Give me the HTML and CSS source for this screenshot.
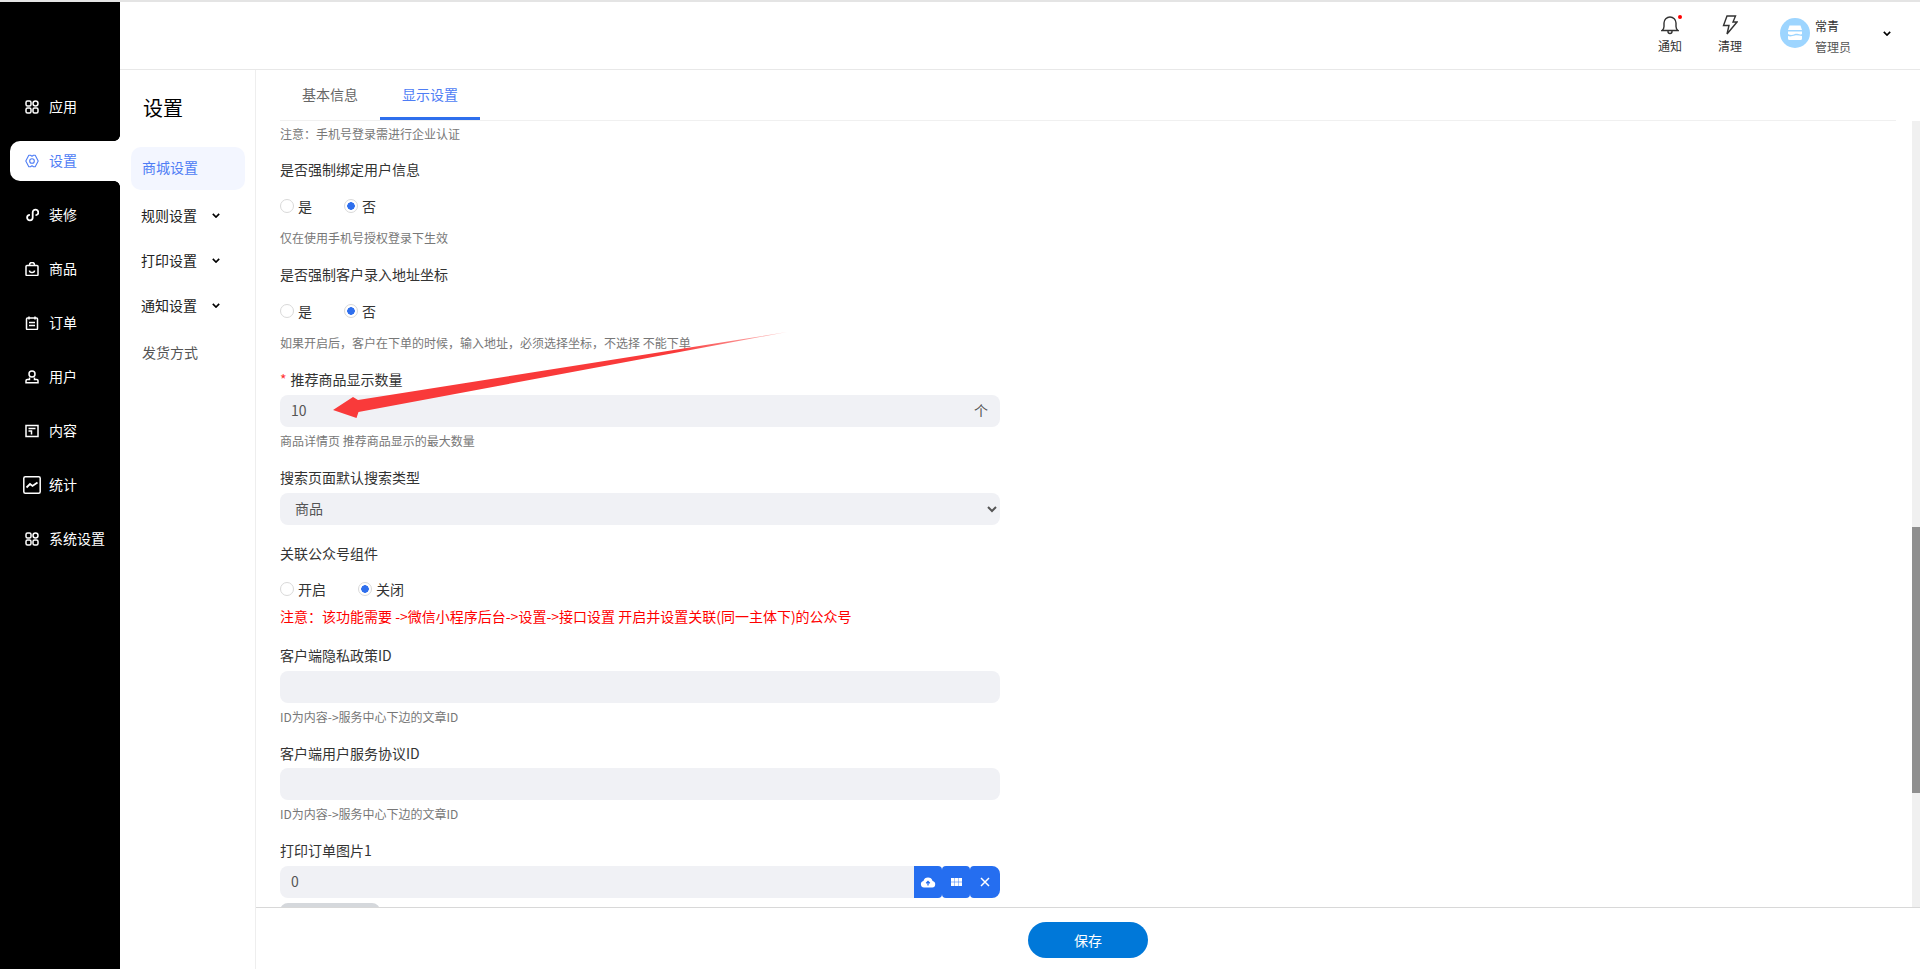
FILE: index.html
```html
<!DOCTYPE html>
<html lang="zh-CN">
<head>
    <meta charset="UTF-8">
    <meta name="viewport" content="width=device-width, initial-scale=1.0">
    <title>显示设置</title>
    <link rel="stylesheet" href="styles.css">
</head>
<body>
<div class="app">

    <!-- Main sidebar -->
    <nav class="sidebar">
        <a class="side-item"><svg class="side-icon" viewBox="0 0 14 14"><rect x="1" y="1" width="5" height="5" rx="1.5"/><rect x="8" y="1" width="5" height="5" rx="2.5"/><rect x="1" y="8" width="5" height="5" rx="1.5"/><rect x="8" y="8" width="5" height="5" rx="1.5"/></svg>应用</a>
        <a class="side-item active"><svg class="side-icon" viewBox="0 0 14 14"><path d="M.8 7L3.800 1.300H5.500L7 2.300 8.500 1.300H10.200L13.200 7 10.200 12.700H8.500L7 11.700 5.500 12.700H3.800z"/><circle cx="7" cy="7" r="2.300"/></svg>设置</a>
        <a class="side-item"><svg class="side-icon" viewBox="0 0 14 14"><path d="M10.500 7.200A2.800 2.800 0 1 0 7.700 4.400V9.600A2.800 2.800 0 1 1 4.900 6.800" stroke-width="1.8"/></svg>装修</a>
        <a class="side-item"><svg class="side-icon" viewBox="0 0 14 14"><rect x="1" y="3.500" width="12" height="10" rx="1"/><path d="M4.500 3.500V3a2.500 2.500 0 0 1 5 0v.5M4.500 8.500a2.500 2 0 0 0 5 0"/></svg>商品</a>
        <a class="side-item"><svg class="side-icon" viewBox="0 0 14 14"><rect x="1.500" y="2" width="11" height="11.500" rx="1"/><path d="M4 .5v3M10 .5v3M4 6.500h6M4 9.500h6"/></svg>订单</a>
        <a class="side-item"><svg class="side-icon" viewBox="0 0 14 14"><circle cx="7" cy="4" r="3"/><path d="M4.500 7.500v2H2.200a1.200 1.200 0 0 0-1.200 1.200v2.100h12v-2.100a1.200 1.200 0 0 0-1.200-1.200H9.500v-2"/></svg>用户</a>
        <a class="side-item"><svg class="side-icon" viewBox="0 0 14 14"><rect x="1" y="1.500" width="12" height="11"/><path d="M3.500 4.500h7M3.500 7h3v3.500"/></svg>内容</a>
        <a class="side-item"><svg class="side-icon stat-icon" viewBox="0 0 18 18"><rect x=".8" y=".8" width="16.400" height="16.400" rx="1.500"/><path d="M3.500 11.500L7 8l2.500 2L14.500 6.500" stroke-width="1.800"/></svg>统计</a>
        <a class="side-item"><svg class="side-icon" viewBox="0 0 14 14"><rect x="1" y="1" width="5" height="5" rx="1.500"/><rect x="8" y="1" width="5" height="5" rx="2.500"/><rect x="1" y="8" width="5" height="5" rx="1.500"/><rect x="8" y="8" width="5" height="5" rx="1.500"/></svg>系统设置</a>
    </nav>

    <div class="main">

        <!-- Top bar -->
        <header class="topbar">
            <div class="tool">
                <span class="tool-icon">
                    <svg width="18" height="20" viewBox="0 0 18 20"><path d="M1 15.500c1.500-1 2-2 2-4V8a6 6 0 0 1 12 0v3.500c0 2 .5 3 2 4zM7 15.500v1a2 2 0 0 0 4 0v-1"/></svg>
                    <i class="red-dot"></i>
                </span>
                通知
            </div>
            <div class="tool">
                <span class="tool-icon">
                    <svg width="16" height="20" viewBox="0 0 16 20"><path d="M5 1h8.500l-2.500 6h4L5 19l2-8.500H1.500z"/></svg>
                </span>
                清理
            </div>
            <div class="user">
                <svg class="avatar" viewBox="0 0 30 30"><circle cx="15" cy="15" r="15" fill="#9dd5ff"/><path d="M8 12l1.500-4.500h11L22 12zM8 13.500h14v2.500c-2.300 1.500-4.700-1-7 0s-4.700 1.500-7 0zM8 18c2.300 1 4.700 0 7-.5s4.700.5 7 .5v2.500a1.500 1.500 0 0 1-1.500 1.500h-11A1.500 1.500 0 0 1 8 20.500z" fill="#fff"/></svg>
                <div class="user-text">
                    <div class="user-name">常青</div>
                    <div class="user-role">管理员</div>
                </div>
                <svg class="chevron user-chevron" viewBox="0 0 10 6"><path d="M1 1l4 4 4-4"/></svg>
            </div>
        </header>

        <div class="below">

            <!-- Settings menu -->
            <aside class="subnav">
                <h2 class="subnav-title">设置</h2>
                <a class="sub-item active">商城设置</a>
                <a class="sub-item dark">规则设置<svg class="chevron" viewBox="0 0 10 6"><path d="M1 1l4 4 4-4"/></svg></a>
                <a class="sub-item dark">打印设置<svg class="chevron" viewBox="0 0 10 6"><path d="M1 1l4 4 4-4"/></svg></a>
                <a class="sub-item dark">通知设置<svg class="chevron" viewBox="0 0 10 6"><path d="M1 1l4 4 4-4"/></svg></a>
                <a class="sub-item last">发货方式</a>
            </aside>

            <section class="panel">
                <div class="tabs">
                    <a class="tab">基本信息</a>
                    <a class="tab active">显示设置</a>
                </div>

                <div class="scroll">
                    <form class="form">
                        <p class="hint first-hint">注意：手机号登录需进行企业认证</p>

                        <div class="form-item radio-item">
                            <label class="form-label">是否强制绑定用户信息</label>
                            <div class="radios">
                                <label class="radio"><input type="radio" name="bind">是</label>
                                <label class="radio"><input type="radio" name="bind" checked>否</label>
                            </div>
                            <p class="hint">仅在使用手机号授权登录下生效</p>
                        </div>

                        <div class="form-item radio-item">
                            <label class="form-label">是否强制客户录入地址坐标</label>
                            <div class="radios">
                                <label class="radio"><input type="radio" name="coord">是</label>
                                <label class="radio"><input type="radio" name="coord" checked>否</label>
                            </div>
                            <p class="hint">如果开启后，客户在下单的时候，输入地址，必须选择坐标，不选择 不能下单</p>
                        </div>

                        <div class="form-item">
                            <label class="form-label"><span class="star">*</span>推荐商品显示数量</label>
                            <div class="field">
                                <input class="input" type="text" value="10">
                                <span class="unit">个</span>
                            </div>
                            <p class="hint">商品详情页 推荐商品显示的最大数量</p>
                        </div>

                        <div class="form-item select-item">
                            <label class="form-label">搜索页面默认搜索类型</label>
                            <select class="input select">
                                <option>商品</option>
                            </select>
                        </div>

                        <div class="form-item radio-item warn-item">
                            <label class="form-label">关联公众号组件</label>
                            <div class="radios">
                                <label class="radio"><input type="radio" name="mp">开启</label>
                                <label class="radio"><input type="radio" name="mp" checked>关闭</label>
                            </div>
                            <p class="warn">注意：该功能需要 -&gt;微信小程序后台-&gt;设置-&gt;接口设置 开启并设置关联(同一主体下)的公众号</p>
                        </div>

                        <div class="form-item">
                            <label class="form-label">客户端隐私政策ID</label>
                            <input class="input" type="text">
                            <p class="hint">ID为内容-&gt;服务中心下边的文章ID</p>
                        </div>

                        <div class="form-item">
                            <label class="form-label">客户端用户服务协议ID</label>
                            <input class="input" type="text">
                            <p class="hint">ID为内容-&gt;服务中心下边的文章ID</p>
                        </div>

                        <div class="form-item">
                            <label class="form-label">打印订单图片1</label>
                            <div class="field-group">
                                <input class="input" type="text" value="0">
                                <button type="button" class="icon-btn btn-first">
                                    <svg width="16" height="12" viewBox="0 0 16 12"><path d="M4 11.500a3.300 3.300 0 0 1-.6-6.500A4.800 4.800 0 0 1 12.600 5a3.300 3.300 0 0 1-.3 6.500z" fill="#fff"/><path d="M8 9.500V5.500M6.200 7.200L8 5.400l1.800 1.800" stroke="#256ef0" stroke-width="1.300" fill="none"/></svg>
                                </button>
                                <button type="button" class="icon-btn">
                                    <svg width="11" height="8" viewBox="0 0 11 8"><path d="M0 0h3.400v3.700H0zM3.800 0h3.400v3.700H3.800zM7.600 0H11v3.700H7.600zM0 4.300h3.400V8H0zM3.800 4.300h3.400V8H3.800zM7.600 4.300H11V8H7.600z" fill="#fff"/></svg>
                                </button>
                                <button type="button" class="icon-btn btn-last">
                                    <svg width="10" height="10" viewBox="0 0 10 10"><path d="M1 1l8 8M9 1l-8 8" stroke="#fff" stroke-width="1.500"/></svg>
                                </button>
                            </div>
                            <div class="preview"></div>
                        </div>
                    </form>

                    <!-- Scrollbar -->
                    <div class="scrollbar"><div class="scroll-thumb"></div></div>
                </div>

                <div class="footer">
                    <button type="button" class="save-btn">保存</button>
                </div>
            </section>
        </div>
    </div>
</div>

<!-- Red arrow drawn on top of the screenshot -->
<svg class="annotation" width="1920" height="969" viewBox="0 0 1920 969">
    <defs>
        <linearGradient id="arrowFade" gradientUnits="userSpaceOnUse" x1="787" y1="332" x2="680" y2="360">
            <stop offset="0" stop-color="#f93a3a" stop-opacity="0.3"/>
            <stop offset="1" stop-color="#f93a3a"/>
        </linearGradient>
    </defs>
    <path d="M787 332L358 400 353 397 333 410 356.500 418 358.500 412z" fill="url(#arrowFade)"/>
</svg>

</body>
</html>
```

FILE: styles.css
```css
* {
    box-sizing: border-box;
}

body {
    margin: 0;
    height: 100vh;
    overflow: hidden;
    border-top: 2px solid #e4e4e4;
    background-color: #fff;
    font-family: "Noto Sans CJK SC", "Noto Sans", sans-serif;
    font-size: 14px;
    color: #333;
}

.app {
    display: flex;
    height: 100%;
}

/* Black sidebar */
.sidebar {
    width: 120px;
    flex-shrink: 0;
    padding: 85px 0 0 10px;
    background-color: #000;
    display: flex;
    flex-direction: column;
    gap: 14px;
}

.side-item {
    position: relative;
    display: flex;
    align-items: center;
    height: 40px;
    padding: 0 0 3px 15px;
    gap: 10px;
    color: #fff;
    border-radius: 10px 0 0 10px;
}

.side-icon {
    width: 14px;
    height: 14px;
    margin-top: 3px;
    fill: none;
    stroke: #fff;
    stroke-width: 1.5;
}

.stat-icon {
    width: 18px;
    height: 18px;
    margin: 3px -2px 0;
}

.side-item.active {
    background-color: #fff;
    color: #4e7df5;
}

.side-item.active .side-icon {
    stroke: #4e7df5;
    stroke-width: 1.1;
    stroke-linejoin: round;
}

/* small flares above and below the active item */
.side-item.active::before,
.side-item.active::after {
    content: "";
    position: absolute;
    right: 0;
    width: 6px;
    height: 6px;
}

.side-item.active::before {
    top: -6px;
    background: radial-gradient(circle at 0 0, #000 5.6px, #fff 6.2px);
}

.side-item.active::after {
    bottom: -6px;
    background: radial-gradient(circle at 0 100%, #000 5.6px, #fff 6.2px);
}

.main {
    flex: 1;
    min-width: 0;
    display: flex;
    flex-direction: column;
}

/* Top bar */
.topbar {
    height: 68px;
    flex-shrink: 0;
    border-bottom: 1px solid #e8e8e8;
    display: flex;
    justify-content: flex-end;
    padding-right: 29px;
}

.tool {
    width: 60px;
    display: flex;
    flex-direction: column;
    align-items: center;
    padding-top: 13px;
    font-size: 12px;
    line-height: 20px;
    color: #333;
}

.tool-icon {
    position: relative;
    height: 22px;
    margin-bottom: -1px;
}

.tool-icon svg {
    display: block;
    fill: none;
    stroke: #333;
    stroke-width: 1.4;
}

.red-dot {
    position: absolute;
    top: 0;
    right: -3px;
    width: 4px;
    height: 4px;
    border-radius: 50%;
    background-color: #f00;
}

.user {
    display: flex;
    align-items: center;
    margin-left: 20px;
}

.avatar {
    width: 30px;
    height: 30px;
    margin-top: -5px;
}

.user-text {
    width: 60px;
    margin-left: 5px;
    font-size: 12px;
    line-height: 21px;
    color: #333;
}

.user-role {
    color: #555;
}

.chevron {
    width: 8px;
    height: 5px;
    fill: none;
    stroke: #000;
    stroke-width: 2;
}

.user-chevron {
    margin-left: 8px;
    margin-top: -4px;
}

.below {
    flex: 1;
    min-height: 0;
    display: flex;
}

/* Settings menu */
.subnav {
    width: 136px;
    flex-shrink: 0;
    border-right: 1px solid #eee;
    padding: 0 10px 0 11px;
}

.subnav-title {
    margin: 24px 0 0 12px;
    font-size: 20px;
    font-weight: 400;
    line-height: 28px;
    color: #000;
}

.sub-item {
    display: flex;
    align-items: center;
    height: 43px;
    padding-left: 11px;
    gap: 15px;
    margin-top: 2px;
    color: #555;
}

.sub-item.active {
    margin-top: 25px;
    margin-bottom: 4px;
    padding-bottom: 3px;
    background-color: #f3f6ff;
    border-radius: 10px;
    color: #4e7df5;
}

.sub-item.dark {
    padding: 0 0 2px 10px;
    color: #222;
}

.sub-item.dark .chevron {
    margin-top: 2px;
}

.sub-item.last {
    margin-top: 3px;
}

.panel {
    flex: 1;
    min-width: 0;
    display: flex;
    flex-direction: column;
}

/* Tabs */
.tabs {
    height: 51px;
    flex-shrink: 0;
    display: flex;
    margin: 0 24px;
    border-bottom: 1px solid #f0f0f0;
}

.tab {
    width: 100px;
    height: 50px;
    line-height: 48px;
    text-align: center;
    color: #666;
}

.tab.active {
    color: #4e7df5;
    border-bottom: 3px solid #2f6fed;
}

.scroll {
    position: relative;
    flex: 1;
    min-height: 0;
    overflow: hidden;
    padding: 3px 24px 0;
}

.scrollbar {
    position: absolute;
    top: 0;
    right: 0;
    bottom: 0;
    width: 8px;
    background-color: #f0f0f0;
}

.scroll-thumb {
    height: 266px;
    margin-top: 406px;
    background-color: #8f8f8f;
}

/* Form */
.form {
    width: 720px;
}

.form-item {
    margin-bottom: 17px;
}

.form-label {
    display: block;
    line-height: 18px;
    margin-bottom: 6.6px;
    color: #333;
}

.star {
    color: #f33;
    margin-right: 4px;
}

.input {
    display: block;
    width: 100%;
    height: 32px;
    padding: 0 11px 2px;
    border: none;
    border-radius: 8px;
    outline: none;
    background-color: #f0f1f5;
    font-family: inherit;
    font-size: 14px;
    color: #555;
}

.select {
    padding: 0 8px 2px 11px;
}

.field {
    position: relative;
}

.unit {
    position: absolute;
    right: 12px;
    top: 0;
    line-height: 31px;
    color: #555;
}

.hint {
    margin: 4px 0 0;
    font-size: 12px;
    line-height: 20px;
    color: #777;
}

.first-hint {
    margin: 0 0 16.4px;
}

.radio-item .form-label {
    margin-bottom: 18px;
}

.radio-item .hint {
    margin-top: 12px;
}

.select-item {
    margin-bottom: 19.4px;
}

.warn-item {
    margin-bottom: 20px;
}

.warn-item .form-label {
    margin-bottom: 17px;
}

.warn {
    margin: 7px 0 0;
    line-height: 20px;
    color: #f00;
}

.radios {
    display: flex;
    gap: 32px;
    height: 20px;
}

.radio {
    display: flex;
    align-items: center;
    gap: 4px;
    line-height: 20px;
    color: #333;
}

.radio input {
    appearance: none;
    margin: 0;
    width: 14px;
    height: 14px;
    border: 1px solid #d9d9d9;
    border-radius: 50%;
    background-color: #fff;
}

.radio input:checked {
    background: radial-gradient(circle, #2f6fed 3.5px, #fff 4px);
}

.field-group {
    display: flex;
}

.field-group .input {
    flex: 1;
    min-width: 0;
    border-radius: 8px 0 0 8px;
}

.icon-btn {
    width: 28px;
    height: 32px;
    padding: 0;
    border: none;
    border-radius: 4px;
    background-color: #256ef0;
    display: flex;
    align-items: center;
    justify-content: center;
}

.btn-first {
    border-radius: 0 4px 4px 0;
}

.btn-last {
    width: 30px;
    border-radius: 4px 8px 8px 4px;
}

.preview {
    width: 100px;
    height: 100px;
    margin-top: 5px;
    background-color: #d5d8dc;
    border-radius: 8px;
}

/* Bottom bar */
.footer {
    height: 62px;
    flex-shrink: 0;
    border-top: 1px solid #d8d8d8;
    background-color: #fff;
    display: flex;
    justify-content: center;
    padding-top: 14px;
}

.save-btn {
    width: 120px;
    height: 36px;
    border: none;
    border-radius: 18px;
    background-color: #0078d9;
    color: #fff;
    font-family: inherit;
    font-size: 14px;
}

.annotation {
    position: absolute;
    top: 0;
    left: 0;
    pointer-events: none;
}
```
